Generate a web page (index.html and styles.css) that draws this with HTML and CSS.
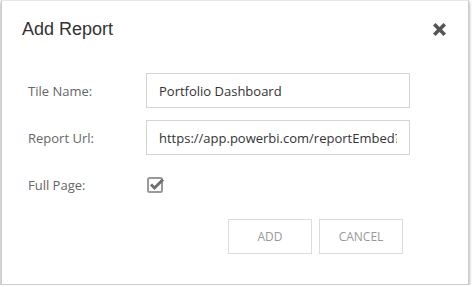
FILE: index.html
```html
<!DOCTYPE html>
<html lang="en">
<head>
    <meta charset="UTF-8">
    <title>Add Report</title>
    <link rel="stylesheet" href="styles.css">
</head>
<body>
    <div class="modal">
        <header class="modal-header">
            <h2>Add Report</h2>
            <button class="close-button" aria-label="Close">
                <svg width="13" height="13" viewBox="0 0 13 13">
                    <path d="M2.5 0 L6.5 4 L10.5 0 L13 2.5 L9 6.5 L13 10.5 L10.5 13 L6.5 9 L2.5 13 L0 10.5 L4 6.5 L0 2.5 Z" fill="#555"/>
                </svg>
            </button>
        </header>

        <form class="report-form">
            <div class="form-row">
                <label for="tileName">Tile Name:</label>
                <input type="text" id="tileName" value="Portfolio Dashboard">
            </div>
            <div class="form-row">
                <label for="reportUrl">Report Url:</label>
                <input type="text" id="reportUrl" value="https://app.powerbi.com/reportEmbed?reportId=">
            </div>
            <div class="form-row">
                <label>Full Page:</label>
                <span class="check">
                    <svg width="18" height="17" viewBox="0 0 18 17">
                        <rect x="1" y="2" width="14" height="14" rx="1.5" fill="none" stroke="#999" stroke-width="2"/>
                        <path d="M4 8.5 L7.5 12 L16 3.5" fill="none" stroke="#707070" stroke-width="3"/>
                    </svg>
                </span>
            </div>
            <div class="actions">
                <button type="button" class="btn">ADD</button>
                <button type="button" class="btn">CANCEL</button>
            </div>
        </form>
    </div>
</body>
</html>
```

FILE: styles.css
```css
body {
    margin: 0;
    background: #fff;
    font-family: "Open Sans", "Noto Sans", sans-serif;
}

.modal {
    width: 468px;
    height: 285px;
    margin-left: 1px;
    background: #fff;
    border: 1px solid #ccc;
    border-top-color: #e6e6e6;
    box-shadow: 0 2px 3px rgba(0,0,0,0.45);
    box-sizing: border-box;
}

.modal-header {
    display: flex;
    justify-content: space-between;
    align-items: center;
    padding: 18px 22px 0 20px;
}

.modal-header h2 {
    margin: 0;
    font-family: "Liberation Sans", Arial, sans-serif;
    font-weight: normal;
    font-size: 18px;
    color: #333;
}

.close-button {
    border: none;
    background: none;
    padding: 0;
    width: 13px;
    height: 13px;
    display: flex;
}

.report-form {
    display: flex;
    flex-direction: column;
    gap: 12px;
    padding: 33px 0 0 26px;
}

.form-row {
    display: flex;
    align-items: center;
    height: 35px;
}

.form-row label {
    width: 118px;
    font-size: 13px;
    color: #666;
}

.form-row input {
    width: 264px;
    height: 35px;
    box-sizing: border-box;
    border: 1px solid #d4d4d4;
    padding: 0 12px;
    font-family: inherit;
    font-size: 13px;
    color: #333;
    outline: none;
}

.check {
    display: flex;
    margin-left: 1px;
}

.actions {
    display: flex;
    justify-content: flex-end;
    gap: 7px;
    margin-top: 5px;
    padding-right: 65px;
}

.btn {
    width: 84px;
    height: 35px;
    border: 1px solid #dcdcdc;
    background: #fff;
    font-family: inherit;
    font-size: 12px;
    color: #999;
}
```
